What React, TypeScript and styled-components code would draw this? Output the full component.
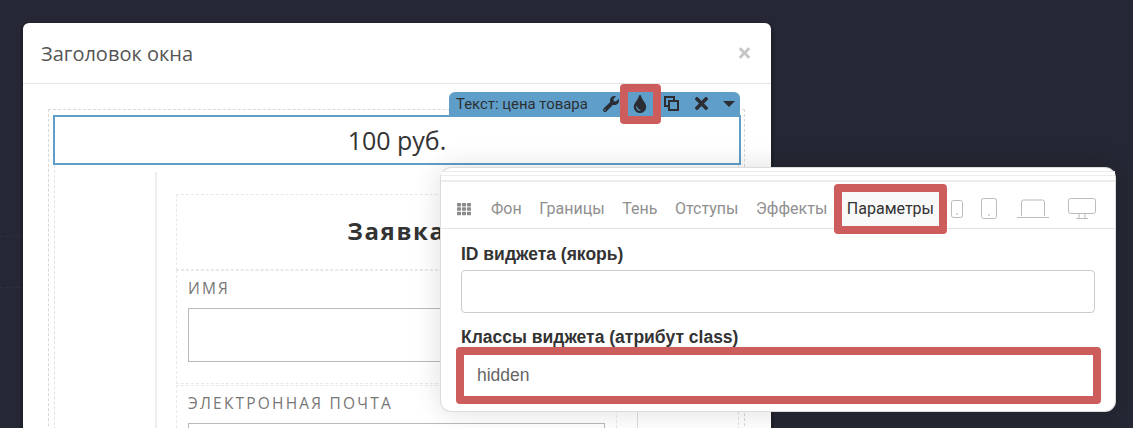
import styled, { createGlobalStyle } from 'styled-components';
import { FaWrench, FaTint, FaTimes, FaTh } from 'react-icons/fa';

const GlobalStyle = createGlobalStyle`
  html, body {
    margin: 0;
    height: 100%;
    background: #252734;
    overflow: hidden;
  }
`;

const Page = styled.div`
  position: relative;
  width: 1133px;
  height: 428px;
  padding: 23px 0 0 23px;
  box-sizing: border-box;
  overflow: hidden;
  font-family: 'Open Sans', sans-serif;
`;

const BackdropLine = styled.div<{ $top: number }>`
  position: absolute;
  left: 0;
  top: ${(p) => p.$top}px;
  width: 20px;
  border-top: 1px dashed #2e303d;
`;

const Modal = styled.div`
  position: relative;
  width: 748px;
  height: 440px;
  background: #fff;
  border-radius: 6px;
  box-shadow: 0 2px 0 3px rgba(0, 0, 0, 0.14);
`;

const ModalHeader = styled.div`
  height: 60px;
  border-bottom: 1px solid #e5e5e5;
  padding: 0 19px 0 18px;
  display: flex;
  align-items: center;
  justify-content: space-between;
`;

const ModalTitle = styled.div`
  font-size: 20px;
  color: #555;
`;

const CloseMark = styled(FaTimes)`
  width: 15px;
  height: 16px;
  color: #c6c6c6;
`;

const ModalBody = styled.div`
  padding: 25px 26px 0 25px;
`;

const OuterDashed = styled.div`
  border: 1px dashed #d8d8d8;
  padding: 5px 0 0 4px;
  height: 340px;
`;

const Selected = styled.div`
  position: relative;
  width: 688px;
  height: 50px;
  box-sizing: border-box;
  border: 2px solid #5f9ec9;
  display: flex;
  align-items: center;
  justify-content: center;
  font-size: 25px;
  color: #333;
`;

const Toolbar = styled.div`
  position: absolute;
  right: -1px;
  top: -25px;
  width: 291px;
  height: 23px;
  box-sizing: border-box;
  background: #5f9ec9;
  border-radius: 6px 6px 0 0;
  display: flex;
  align-items: center;
  padding-left: 7px;
  color: #2d2f33;
  font-family: 'Roboto', sans-serif;
  font-size: 14.9px;
`;

const ToolbarLabel = styled.span`
  flex: none;
  width: 141px;
  white-space: nowrap;
`;

const ToolIcon = styled.span<{ $w: number; $size: number }>`
  flex: none;
  width: ${(p) => p.$w}px;
  display: flex;
  align-items: center;
  justify-content: center;
  font-size: ${(p) => p.$size}px;
  color: #2b2d33;
`;

const Highlight = styled.div`
  position: absolute;
  left: 171px;
  top: -8px;
  width: 41px;
  height: 40px;
  box-sizing: border-box;
  border: 8px solid #cd5c5c;
  border-radius: 4px;
`;

const Below = styled.div`
  width: 685px;
  height: 290px;
  box-sizing: border-box;
  border-left: 1px dashed #e2e2e2;
  border-right: 1px dashed #e2e2e2;
  margin-left: 1px;
  padding: 7px 0 0 100px;
  overflow: hidden;
`;

const Column = styled.div`
  width: 483px;
  box-sizing: border-box;
  border-left: 2px solid #eeeeee;
  border-right: 1px solid #dddddd;
  padding: 22px 0 0 19px;
  height: 300px;
`;

const HeadingBlock = styled.div`
  height: 76px;
  width: 441px;
  border: 1px dashed #e8e8e8;
  padding-top: 19px;
  box-sizing: border-box;
  text-align: center;
  font-size: 24px;
  font-weight: 700;
  letter-spacing: 1.6px;
  color: #333;
`;

const FieldBlock = styled.div`
  border: 1px dashed #e8e8e8;
  width: 441px;
  height: 114px;
  box-sizing: border-box;
  padding: 7px 11px 0 11px;
  margin-bottom: 1px;
`;

const FieldLabel = styled.div`
  font-size: 15.5px;
  letter-spacing: 2.2px;
  color: #777;
  height: 30px;
  line-height: 20px;
`;

const FieldBox = styled.div`
  height: 54px;
  width: 417px;
  box-sizing: border-box;
  border: 1px solid #b9b9b9;
`;

const Panel = styled.div`
  position: absolute;
  left: 441px;
  top: 168px;
  width: 674px;
  height: 243px;
  box-sizing: border-box;
  background: #fff;
  border-radius: 10px;
  box-shadow: 0 0 0 1px #dcdcdc, 0 0 30px rgba(0, 0, 0, 0.14);
  font-family: 'Roboto', sans-serif;
`;

const PanelStripes = styled.div`
  height: 11px;
  margin: 3px 0;
  border-top: 1px solid #ececec;
  border-bottom: 2px solid #ececec;
  box-sizing: border-box;
  background: linear-gradient(#fff 0 3px, #ececec 3px 4px, #fff 4px);
`;

const TabsRow = styled.div`
  height: 44px;
  border-bottom: 1px solid #e2e2e2;
  display: flex;
  align-items: center;
  padding: 4px 0 0 16px;
  box-sizing: border-box;
`;

const GridMark = styled(FaTh)`
  width: 14px;
  height: 14px;
  color: #8b8b8b;
  margin-right: 20px;
`;

const Tab = styled.span<{ $active?: boolean }>`
  font-size: 16px;
  color: ${(p) => (p.$active ? '#333' : '#8f8f8f')};
  margin-right: ${(p) => (p.$active ? 0 : 17.6)}px;
  white-space: nowrap;
`;

const ActiveTab = styled.div`
  flex: none;
  width: 113px;
  height: 50px;
  box-sizing: border-box;
  display: flex;
  align-items: center;
  justify-content: center;
  margin: 0 4px 0 -11px;
  background: #f9f9f9;
  border: 8px solid #cd5c5c;
  border-radius: 4px;
`;

const Devices = styled.div`
  display: flex;
  align-items: center;
  color: #bbb;
`;

const Device = styled.svg<{ $gap: number }>`
  margin-left: ${(p) => p.$gap}px;
  display: block;
`;

const PanelBody = styled.div`
  padding: 15px 20px 0 20px;
`;

const PanelLabel = styled.div`
  font-family: 'Liberation Sans', sans-serif;
  font-weight: 700;
  font-size: 17.5px;
  color: #333;
  line-height: 20px;
  margin-bottom: 6px;
  white-space: nowrap;
`;

const PanelInput = styled.div`
  height: 43px;
  box-sizing: border-box;
  border: 1px solid #ccc;
  border-radius: 4px;
  margin-bottom: 14px;
`;

const HighlightedInput = styled.div`
  height: 57px;
  margin: -6px -6px 0 -5px;
  box-sizing: border-box;
  border: 8px solid #cd5c5c;
  border-radius: 4px;
  background: #fff;
  display: flex;
  align-items: center;
  padding-left: 13px;
  font-size: 17.5px;
  color: #666;
  font-family: 'Liberation Sans', sans-serif;
`;

export default function App() {
  return (
    <>
      <GlobalStyle />
      <Page>
        <BackdropLine $top={236} />
        <BackdropLine $top={287} />
        <Modal>
          <ModalHeader>
            <ModalTitle>Заголовок окна</ModalTitle>
            <CloseMark />
          </ModalHeader>
          <ModalBody>
            <OuterDashed>
              <Selected>
                100 руб.
                <Toolbar>
                  <ToolbarLabel>Текст: цена товара</ToolbarLabel>
                  <ToolIcon $w={27} $size={16}><FaWrench /></ToolIcon>
                  <ToolIcon $w={32} $size={18}><FaTint /></ToolIcon>
                  <ToolIcon $w={30} $size={15}>
                    <svg width="15" height="15" viewBox="0 0 15 15" fill="none" stroke="currentColor" strokeWidth="2">
                      <path d="M10 5V1H1v9h4" />
                      <rect x="5" y="5" width="9" height="9" />
                    </svg>
                  </ToolIcon>
                  <ToolIcon $w={30} $size={19}><FaTimes /></ToolIcon>
                  <ToolIcon $w={26} $size={12}>
                    <svg width="12" height="6" viewBox="0 0 12 6" fill="currentColor">
                      <path d="M0 0h12L6 6z" />
                    </svg>
                  </ToolIcon>
                  <Highlight />
                </Toolbar>
              </Selected>
              <Below>
                <Column>
                  <HeadingBlock>Заявка</HeadingBlock>
                  <FieldBlock>
                    <FieldLabel>ИМЯ</FieldLabel>
                    <FieldBox />
                  </FieldBlock>
                  <FieldBlock>
                    <FieldLabel>ЭЛЕКТРОННАЯ ПОЧТА</FieldLabel>
                    <FieldBox />
                  </FieldBlock>
                </Column>
              </Below>
            </OuterDashed>
          </ModalBody>
        </Modal>
        <Panel>
          <PanelStripes />
          <TabsRow>
            <GridMark />
            <Tab>Фон</Tab>
            <Tab>Границы</Tab>
            <Tab>Тень</Tab>
            <Tab>Отступы</Tab>
            <Tab>Эффекты</Tab>
            <ActiveTab>
              <Tab $active>Параметры</Tab>
            </ActiveTab>
            <Devices>
              <Device $gap={0} width="12" height="18" viewBox="0 0 12 18" fill="none" stroke="currentColor">
                <rect x="0.5" y="0.5" width="11" height="17" rx="2" />
                <circle cx="6" cy="14" r="0.5" />
              </Device>
              <Device $gap={18} width="16" height="21" viewBox="0 0 16 21" fill="none" stroke="currentColor">
                <rect x="0.5" y="0.5" width="15" height="20" rx="2" />
                <circle cx="8" cy="17" r="0.5" />
              </Device>
              <Device $gap={20} width="32" height="19" viewBox="0 0 32 19" fill="none" stroke="currentColor">
                <path d="M4.5 17V3a2 2 0 0 1 2-2h19a2 2 0 0 1 2 2v14M0 18.5h32" />
              </Device>
              <Device $gap={19} width="28" height="21" viewBox="0 0 28 21" fill="none" stroke="currentColor">
                <rect x="0.5" y="0.5" width="27" height="15" rx="2" />
                <path d="M11 16v4M17 16v4M8 20.5h12" />
              </Device>
            </Devices>
          </TabsRow>
          <PanelBody>
            <PanelLabel>ID виджета (якорь)</PanelLabel>
            <PanelInput />
            <PanelLabel>Классы виджета (атрибут class)</PanelLabel>
            <HighlightedInput>hidden</HighlightedInput>
          </PanelBody>
        </Panel>
      </Page>
    </>
  );
}
